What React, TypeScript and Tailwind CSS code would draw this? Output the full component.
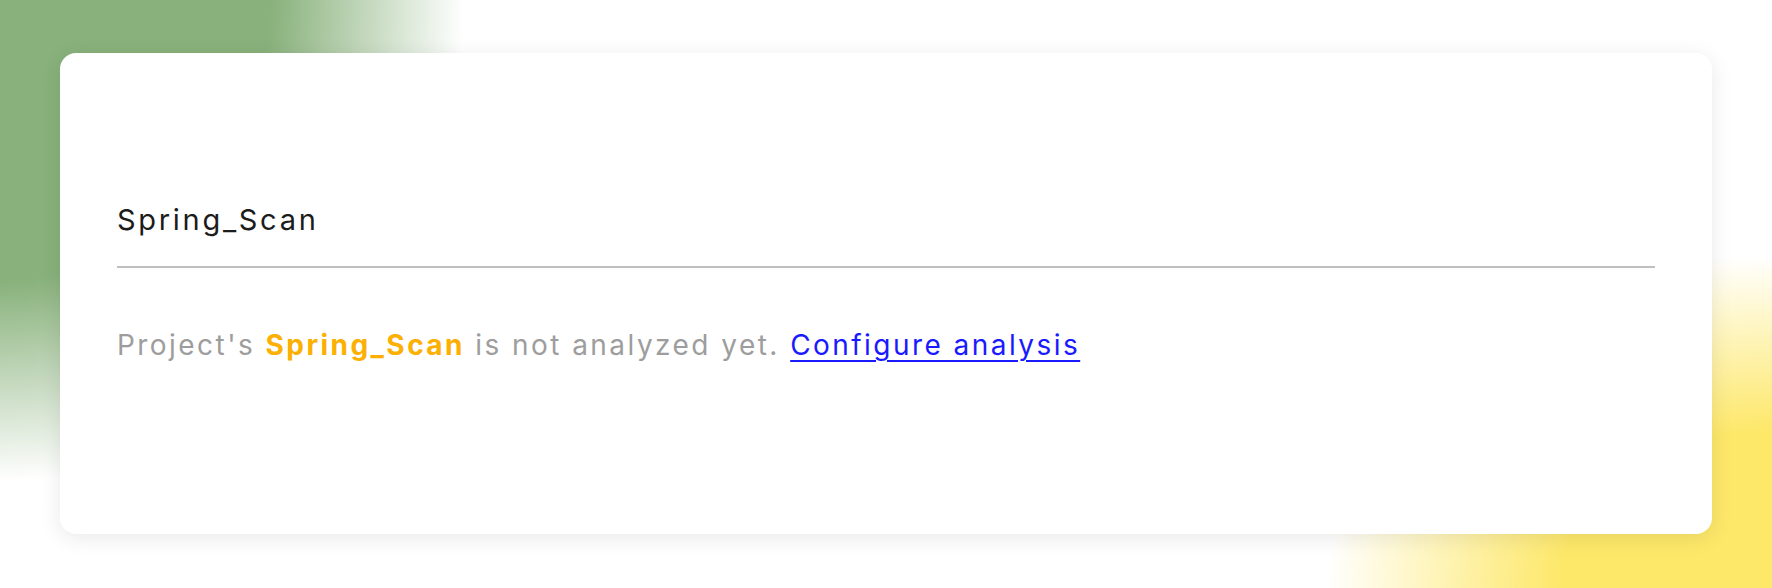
export default function App() {
  return (
    <div
      className="w-[1772px] h-[588px] overflow-hidden bg-white pt-[53px] pl-[60px] bg-[radial-gradient(ellipse_540px_560px_at_0%_0%,#88b17b_0%,#88b17b_50%,rgba(136,177,123,0)_86%),radial-gradient(ellipse_470px_350px_at_100%_100%,#fde86a_0%,#fde86a_45%,rgba(253,232,106,0)_95%)]"
      style={{ fontFamily: "Inter, 'Noto Sans', sans-serif" }}
    >
      <div className="w-[1652px] h-[481px] bg-white rounded-[16px] shadow-[0_4px_22px_rgba(0,0,0,0.09)] px-[57px] pt-[149px]">
        <div className="text-[29px] leading-[36px] text-[#1c1c1c] pb-[28px] border-b-2 border-[#bfbfbf] tracking-[2.7px]">
          Spring_Scan
        </div>
        <p className="mt-[59px] text-[28px] leading-[36px] text-[#9d9d9d] tracking-[2.45px]">
          Project's{" "}
          <span className="font-bold text-[#fbb003]">Spring_Scan</span> is not
          analyzed yet.{" "}
          <a href="#" className="text-[#1a1aff] underline underline-offset-[5px] decoration-[2px]">
            Configure analysis
          </a>
        </p>
      </div>
    </div>
  );
}
